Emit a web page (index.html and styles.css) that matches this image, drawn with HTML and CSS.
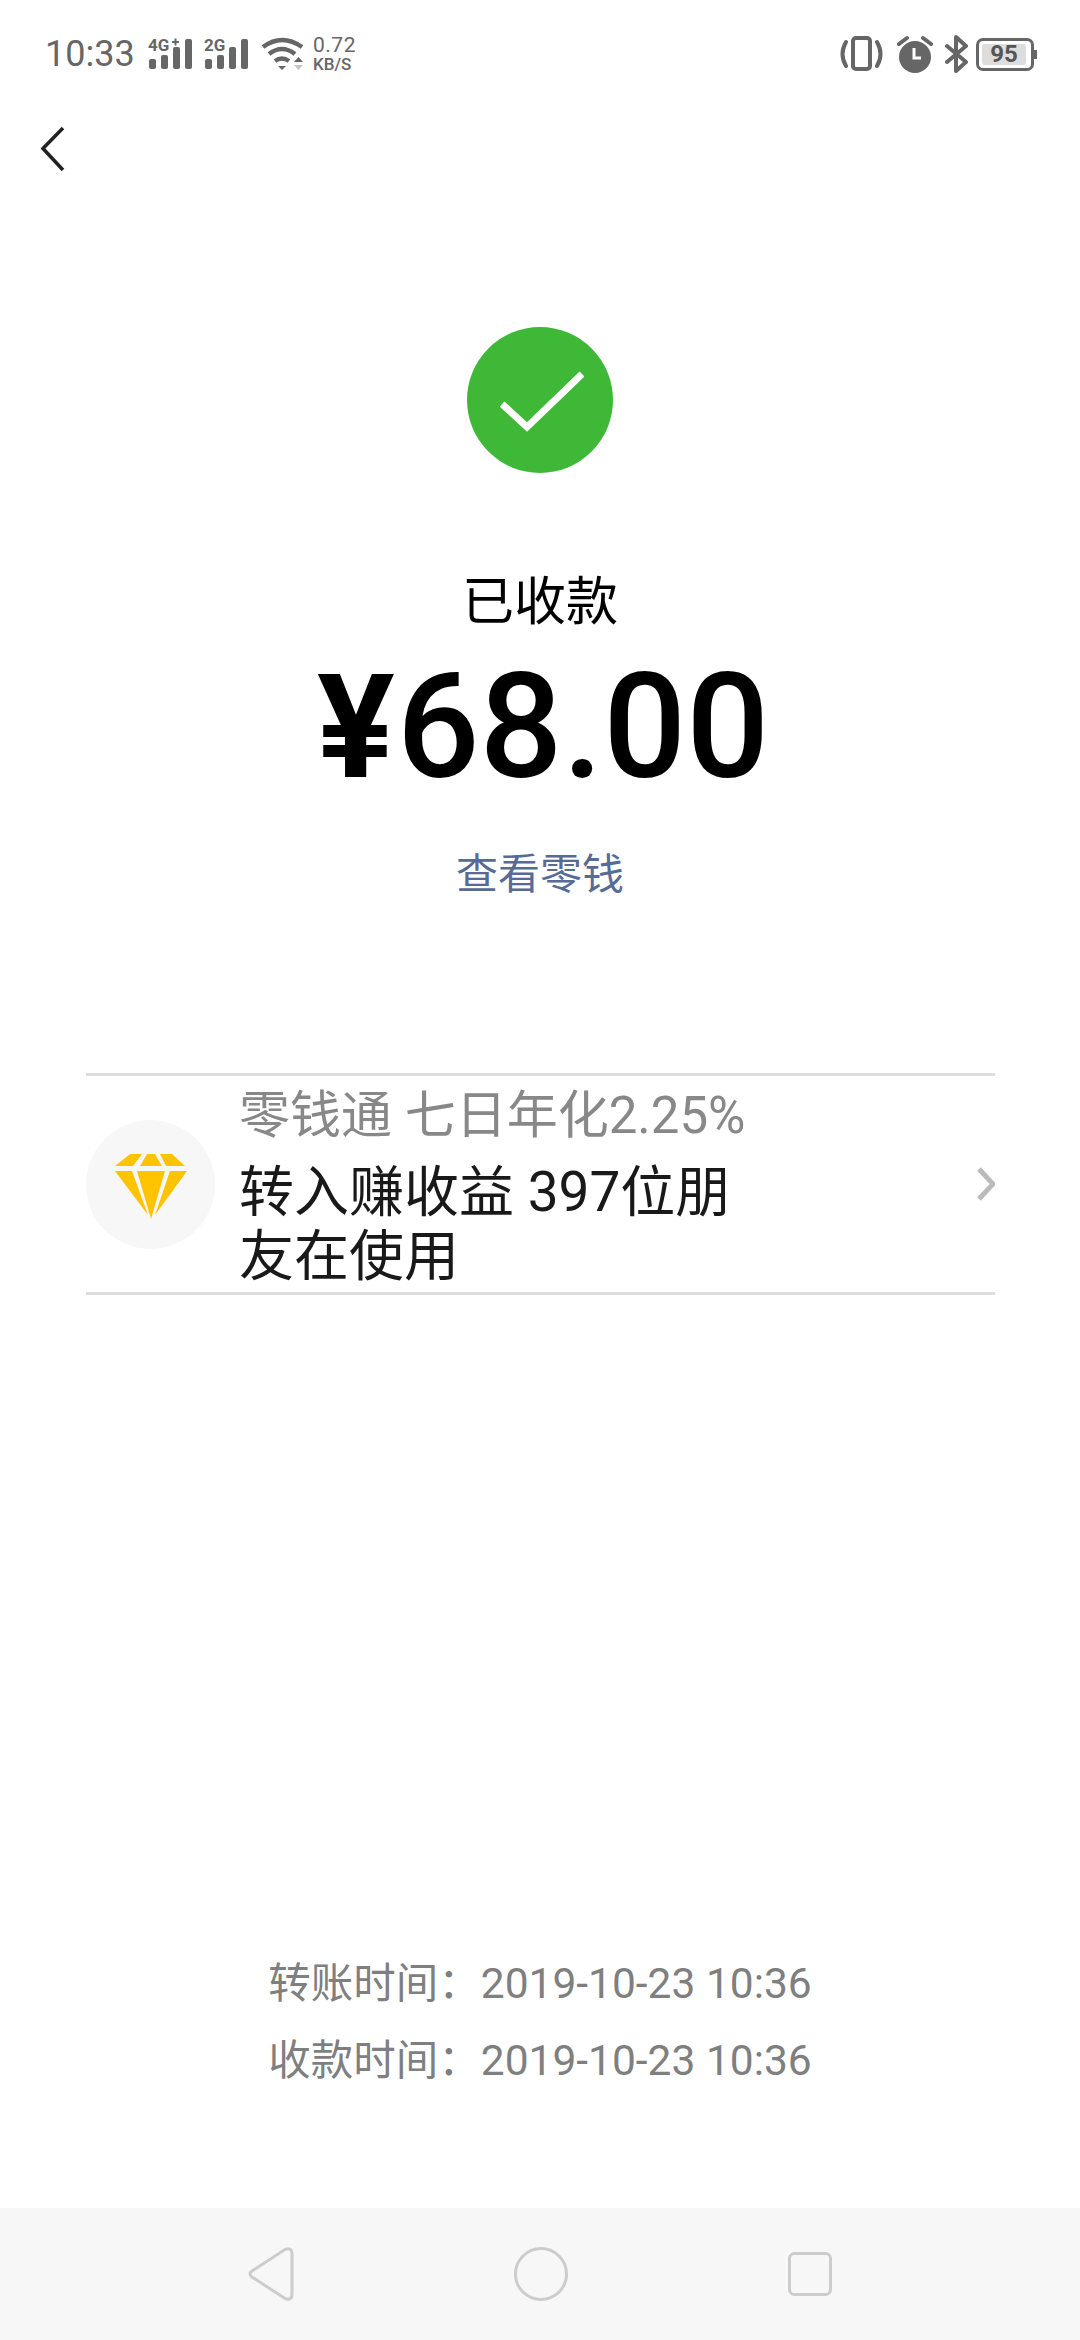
FILE: index.html
```html
<!DOCTYPE html>
<html lang="zh-CN">
<head>
    <meta charset="UTF-8">
    <meta name="viewport" content="width=device-width, initial-scale=1.0">
    <title>已收款</title>
    <link rel="stylesheet" href="styles.css">
</head>
<body>
    <div class="status-bar">
        <div class="status-left">
            <span class="clock">10:33</span>
            <svg class="signal" width="46" height="40" viewBox="0 -4 46 40">
                <text class="signal-label" x="0" y="13">4G</text>
                <path class="signal-plus" d="M24 4h7M27.500 0.500v7"/>
                <rect x="1" y="21" width="7" height="10" rx="2"/>
                <rect x="13" y="17" width="7" height="14" rx="2"/>
                <rect x="25" y="9" width="7" height="22" rx="2"/>
                <rect x="37" y="1" width="7" height="30" rx="2"/>
            </svg>
            <svg class="signal" width="46" height="40" viewBox="0 -4 46 40">
                <text class="signal-label" x="0" y="13">2G</text>
                <rect x="1" y="21" width="7" height="10" rx="2"/>
                <rect x="13" y="17" width="7" height="14" rx="2"/>
                <rect x="25" y="9" width="7" height="22" rx="2"/>
                <rect x="37" y="1" width="7" height="30" rx="2"/>
            </svg>
            <svg class="wifi" width="44" height="34" viewBox="0 0 44 34">
                <path d="M2 10 Q21 -4 41 10"/>
                <path d="M8 17 Q21 7 34 17"/>
                <path d="M14 24 Q21 19 28 24"/>
                <path class="wifi-fill" d="M17 29h8l-4 4z"/>
                <path class="wifi-fill" d="M33 25h9l-4.500 -5z"/>
                <path class="wifi-fill wifi-down" d="M33 28h9l-4.500 5z"/>
            </svg>
            <div class="net-speed">
                <span class="speed-value">0.72</span>
                <span class="speed-unit">KB/S</span>
            </div>
        </div>
        <div class="status-right">
            <svg class="status-line vibrate" width="44" height="36" viewBox="0 0 44 36">
                <rect x="14" y="2" width="17" height="31" rx="3"/>
                <path d="M7 6 Q0 18 7 30M38 6 Q45 18 38 30"/>
            </svg>
            <svg class="status-solid" width="36" height="38" viewBox="0 0 36 38">
                <circle cx="18" cy="22" r="16"/>
                <path class="alarm-ears" d="M2 9 L10 3M34 9 L26 3"/>
                <path class="alarm-hands" d="M17 13v10h7"/>
            </svg>
            <svg class="status-line" width="24" height="38" viewBox="0 0 24 38">
                <path d="M2 11 L21 27 L11 36 V2 L21 11 L2 27"/>
            </svg>
            <div class="battery"><span>95</span></div>
        </div>
    </div>

    <div class="nav-top">
        <svg width="24" height="46" viewBox="0 0 24 46">
            <path d="M22 2 L2 22.500 L22 44"/>
        </svg>
    </div>

    <div class="result">
        <div class="result-icon">
            <svg width="84" height="66" viewBox="0 0 84 66">
                <path d="M2 35 L27 58 L82 5"/>
            </svg>
        </div>
        <div class="result-title">已收款</div>
        <div class="result-amount"><span class="currency">¥</span>68.00</div>
        <a class="result-link">查看零钱</a>
    </div>

    <div class="promo">
        <div class="promo-icon">
            <svg width="72" height="66" viewBox="0 0 72 66">
                <path d="M15 0h12l-9 12H0zM32 0h8l7 12H25zM45 0h12l13 12H51z"/>
                <path d="M0 17h17l16 44zM22 17h28L36 65zM55 17h17L40 61z"/>
            </svg>
        </div>
        <div class="promo-text">
            <div class="promo-title">零钱通 七日年化2.25%</div>
            <div class="promo-desc">转入赚收益 397位朋友在使用</div>
        </div>
        <svg class="promo-arrow" width="22" height="36" viewBox="0 0 22 36">
            <path d="M6 3 L20 18 L6 33"/>
        </svg>
    </div>

    <div class="times">
        <div class="time-row">转账时间：2019-10-23 10:36</div>
        <div class="time-row">收款时间：2019-10-23 10:36</div>
    </div>

    <div class="nav-buttons">
        <svg width="46" height="54" viewBox="0 0 46 54">
            <path d="M4 24 L37 2.500 Q44 0 44 7 V47 Q44 54 37 51.500 L4 30 Q0 27 4 24z"/>
        </svg>
        <svg width="54" height="54" viewBox="0 0 54 54">
            <circle cx="27" cy="27" r="25.500"/>
        </svg>
        <svg width="44" height="44" viewBox="0 0 44 44">
            <rect x="1.500" y="1.500" width="41" height="41" rx="5"/>
        </svg>
    </div>
</body>
</html>
```

FILE: styles.css
```css
* {
    box-sizing: border-box;
}

body {
    margin: 0;
    width: 1080px;
    height: 2340px;
    background: #fff;
    display: flex;
    flex-direction: column;
    font-family: Roboto, "Noto Sans CJK SC", sans-serif;
    overflow: hidden;
}

.status-bar {
    height: 108px;
    padding: 0 46px 0 45px;
    display: flex;
    justify-content: space-between;
    align-items: center;
    color: #666;
}

.status-left,
.status-right {
    display: flex;
    align-items: center;
}

.clock {
    font-size: 36px;
    width: 103px;
}

.signal {
    margin-right: 10px;
    fill: #666;
}

.signal-label {
    font-family: Roboto, sans-serif;
    font-size: 17px;
    font-weight: 700;
}

.signal-plus {
    stroke: #666;
    stroke-width: 2;
    fill: none;
}

.wifi {
    margin-left: 1px;
    fill: none;
}

.wifi path {
    stroke: #666;
    stroke-width: 4.500;
}

.wifi .wifi-fill {
    stroke: none;
    fill: #666;
}

.wifi .wifi-down {
    fill: #c4c4c4;
}

.net-speed {
    margin-left: 8px;
    display: flex;
    flex-direction: column;
    line-height: 1;
}

.speed-value {
    font-size: 21px;
    letter-spacing: 0.5px;
}

.speed-unit {
    font-size: 17px;
    font-weight: 500;
}

.status-right {
    gap: 12px;
}

.status-line {
    fill: none;
    stroke: #666;
    stroke-width: 4;
    stroke-linecap: round;
    stroke-linejoin: round;
}

.vibrate {
    margin-right: 2px;
}

.status-solid {
    fill: #666;
}

.alarm-ears {
    stroke: #666;
    stroke-width: 4;
    stroke-linecap: round;
    fill: none;
}

.alarm-hands {
    stroke: #fff;
    stroke-width: 3;
    fill: none;
}

.battery {
    position: relative;
    width: 58px;
    height: 33px;
    border: 3px solid #666;
    border-radius: 7px;
    padding: 3px;
    margin-left: -5px;
}

.battery span {
    display: block;
    height: 100%;
    width: 44px;
    background: #ddd;
    border-radius: 3px;
    font-size: 24px;
    font-weight: 700;
    line-height: 21px;
    text-align: center;
    color: #555;
}

.battery::after {
    content: "";
    position: absolute;
    right: -6px;
    top: 9px;
    width: 3px;
    height: 9px;
    background: #666;
}

.nav-top {
    height: 66px;
    padding: 18px 0 0 41px;
    line-height: 0;
}

.nav-top svg {
    fill: none;
    stroke: #222;
    stroke-width: 3.500;
}

.result {
    display: flex;
    flex-direction: column;
    align-items: center;
    padding-top: 153px;
}

.result-icon {
    width: 146px;
    height: 146px;
    padding: 4px 0 0 4px;
    border-radius: 50%;
    background: #3fb838;
    display: flex;
    align-items: center;
    justify-content: center;
}

.result-icon svg {
    flex: none;
    fill: none;
    stroke: #fff;
    stroke-width: 7;
}

.result-title {
    margin-top: 95px;
    font-size: 52px;
    line-height: 70px;
    color: #000;
}

.result-amount {
    margin: 1px 0 0 6px;
    font-size: 146px;
    font-weight: 500;
    line-height: 176px;
    color: #000;
}

.currency {
    font-size: 145px;
    font-weight: 700;
    margin-right: 2px;
}

.result-link {
    margin-top: 29px;
    font-size: 42px;
    line-height: 60px;
    color: #576b95;
}

.promo {
    margin: 168px 85px 0 86px;
    height: 222px;
    border-top: 3px solid #ddd;
    border-bottom: 3px solid #ddd;
    display: flex;
    align-items: center;
}

.promo-icon {
    flex: none;
    width: 129px;
    height: 129px;
    padding-top: 5px;
    border-radius: 50%;
    background: #f7f7f7;
    display: flex;
    align-items: center;
    justify-content: center;
}

.promo-icon svg {
    fill: #ffc300;
}

.promo-text {
    margin: 1px 0 0 24px;
    width: 500px;
}

.promo-title {
    font-size: 51px;
    line-height: 68px;
    color: #888;
    white-space: nowrap;
}

.promo-desc {
    font-size: 55px;
    line-height: 64px;
    margin-top: 10px;
    color: #191919;
}

.promo-arrow {
    margin-left: auto;
    fill: none;
    stroke: #bbb;
    stroke-width: 5;
}

.times {
    margin-top: auto;
    margin-bottom: 109px;
    display: flex;
    flex-direction: column;
    align-items: center;
}

.time-row {
    font-size: 42.500px;
    line-height: 77px;
    color: #7f7f7f;
}

.nav-buttons {
    height: 132px;
    background: #f7f7f7;
    position: relative;
    display: flex;
    align-items: center;
    padding: 0 248px;
    justify-content: space-between;
}

.nav-buttons svg {
    fill: none;
    stroke: #ccc;
    stroke-width: 3;
}
```
